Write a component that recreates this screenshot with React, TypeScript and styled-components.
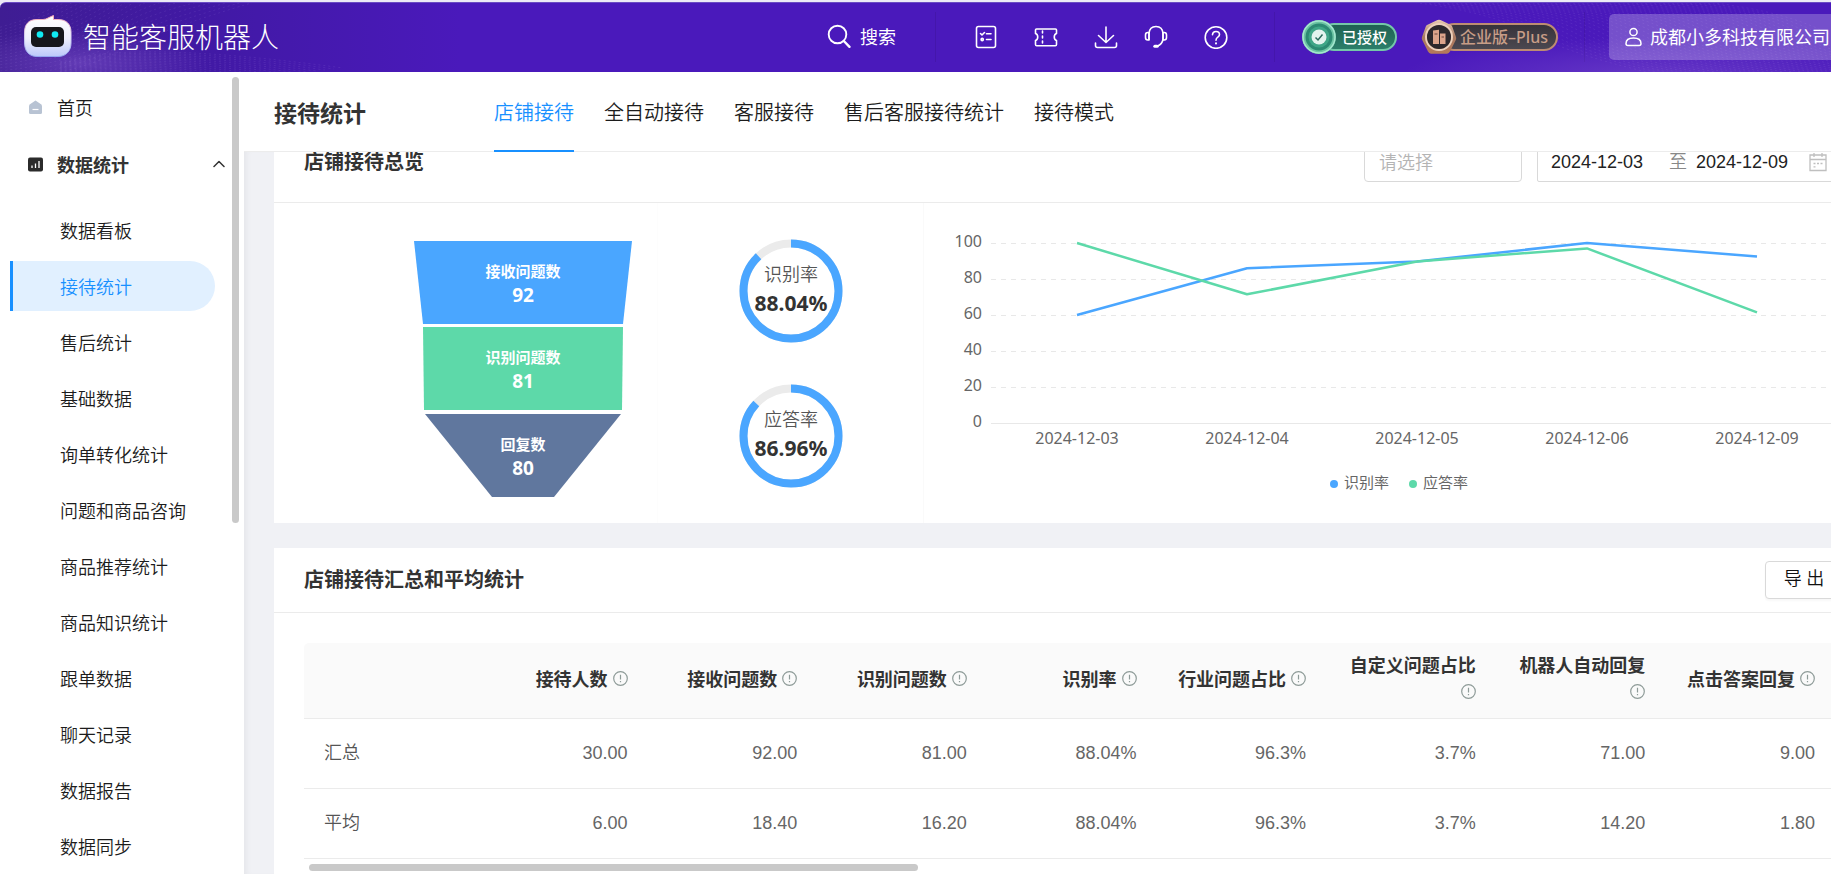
import React, { useLayoutEffect, useRef } from "react";
import styled, { createGlobalStyle } from "styled-components";

const cjk = `"Noto Sans", "Noto Sans CJK SC", sans-serif`;
const latin = `"Liberation Sans", "Noto Sans CJK SC", sans-serif`;

const GlobalStyle = createGlobalStyle`
  *, *::before, *::after { box-sizing: border-box; }
  body { margin: 0; font-family: ${cjk}; font-size: 18px; color: #333; background: #f0f1f5; }
  button, input, select { font: inherit; color: inherit; }
  h1, h2, ul, p { margin: 0; padding: 0; }
  ul { list-style: none; }
  a { color: inherit; text-decoration: none; }
`;

const Viewport = styled.div`
  height: 100vh;
  overflow-x: auto;
  overflow-y: hidden;
  scrollbar-width: none;
`;
const Shell = styled.div`
  display: flex;
  flex-direction: column;
  min-width: 1903px;
  height: 100%;
  padding-top: 2px;
  background: #eceaf6;
`;

/* ---------- top bar ---------- */
const TopBar = styled.header`
  position: relative;
  flex: none;
  display: flex;
  align-items: center;
  height: 70px;
  padding: 0 30px 2px 24px;
  overflow: hidden;
  border-top: 1px solid #6a4bc4;
  border-top-left-radius: 6px;
  background: linear-gradient(90deg, #3f1d93 0, #4119a4 200px, #4a19bb 460px, #4a19bb 100%);
  color: #fff;
`;
const Waves = styled.svg`
  position: absolute;
  inset: 0;
  width: 100%;
  height: 100%;
  pointer-events: none;
`;
const Brand = styled.a`
  position: relative;
  display: flex;
  align-items: center;
  gap: 11px;
  margin-right: auto;
`;
const BrandName = styled.span`
  font-size: 28px;
  font-weight: 300;
  line-height: 40px;
`;
const SearchButton = styled.button`
  position: relative;
  display: flex;
  align-items: center;
  gap: 8px;
  padding: 0 39px 0 0;
  border: 0;
  background: none;
  font-size: 18px;
  line-height: 24px;
`;
const Divider = styled.span`
  width: 1px;
  height: 50px;
  background: #4416ab;
`;
const Tools = styled.nav`
  position: relative;
  display: flex;
  gap: 36px;
  padding: 0 46px 0 38px;
`;
const ToolPair = styled.div`
  display: flex;
  gap: 26px;
`;
const ToolButton = styled.button`
  display: flex;
  width: 24px;
  height: 24px;
  padding: 0;
  border: 0;
  background: none;
`;
const Badges = styled.div`
  position: relative;
  display: flex;
  align-items: center;
  gap: 24px;
  padding: 0 26px;
`;
const Badge = styled.div`
  display: flex;
  align-items: center;
  svg { position: relative; flex: none; }
`;
const BadgeText = styled.span<{ $tone: "green" | "bronze" }>`
  margin-left: -17px;
  padding: 0 8px 0 ${(p) => (p.$tone === "green" ? 20 : 18)}px;
  border: 2px solid ${(p) => (p.$tone === "green" ? "#74c8a8" : "#bd8c72")};
  border-radius: 15px;
  background: ${(p) =>
    p.$tone === "green" ? "linear-gradient(#1f6152, #2c7f6a)" : "linear-gradient(#37333a, #4b4850)"};
  color: ${(p) => (p.$tone === "green" ? "#fff" : "#c79d87")};
  font-size: ${(p) => (p.$tone === "green" ? 15 : 16)}px;
  font-weight: 500;
  line-height: 24px;
  white-space: nowrap;
`;
const Account = styled.button`
  position: relative;
  display: flex;
  align-items: center;
  gap: 8px;
  width: 264px;
  height: 46px;
  margin-left: 24px;
  padding: 0 16px;
  border: 0;
  border-radius: 5px;
  background: rgba(255, 255, 255, 0.24);
  font-size: 18px;
  line-height: 24px;
  white-space: nowrap;
`;

/* ---------- frame ---------- */
const Body = styled.div`
  flex: 1;
  display: flex;
  min-height: 0;
  background: #f0f1f5;
`;
const Sidebar = styled.aside`
  position: relative;
  z-index: 2;
  flex: none;
  width: 244px;
  padding-top: 10px;
  overflow: hidden;
  background: #fff;
`;
const SideThumb = styled.span`
  position: absolute;
  top: 5px;
  right: 5px;
  width: 7px;
  height: 446px;
  border-radius: 4px;
  background: #c9c9c9;
`;
const SideTop = styled.a<{ $bold?: boolean }>`
  display: flex;
  align-items: center;
  height: 50px;
  margin-bottom: 7px;
  padding: 0 19px 0 28px;
  font-weight: ${(p) => (p.$bold ? 700 : 350)};
  color: ${(p) => (p.$bold ? "#333" : "#1c1c1c")};
  span { margin-left: 14px; }
  svg:last-child:not(:first-child) { margin-left: auto; }
`;
const SideLink = styled.a<{ $active?: boolean }>`
  display: flex;
  align-items: center;
  height: 50px;
  margin: 0 29px 6px 10px;
  padding-left: 47px;
  border-left: 3px solid ${(p) => (p.$active ? "#1890ff" : "transparent")};
  border-radius: 0 25px 25px 0;
  background: ${(p) => (p.$active ? "#e1f0ff" : "transparent")};
  color: ${(p) => (p.$active ? "#1890ff" : "#1c1c1c")};
  font-weight: 350;
`;
const SubMenu = styled.ul`
  padding-top: 9px;
`;
const Main = styled.main`
  flex: 1;
  display: flex;
  flex-direction: column;
  min-width: 0;
`;
const TitleBar = styled.div`
  flex: none;
  display: flex;
  align-items: stretch;
  height: 80px;
  padding-left: 30px;
  border-bottom: 1px solid #ececec;
  background: #fff;
`;
const PageTitle = styled.h1`
  width: 220px;
  font-size: 23px;
  line-height: 82px;
`;
const Tabs = styled.nav`
  display: flex;
  gap: 30px;
  margin-bottom: -1px;
`;
const Tab = styled.a<{ $active?: boolean }>`
  padding-top: 1px;
  border-bottom: 2px solid ${(p) => (p.$active ? "#1890ff" : "transparent")};
  color: ${(p) => (p.$active ? "#1890ff" : "#1c1c1c")};
  font-size: 20px;
  font-weight: 350;
  line-height: 80px;
`;
const Scroller = styled.div`
  flex: 1;
  min-height: 0;
  padding: 24px 30px;
  overflow-y: auto;
  scrollbar-width: none;
  box-shadow: inset 6px 0 6px -4px rgba(0, 0, 0, 0.05);
`;
const Card = styled.section`
  margin-bottom: 25px;
  background: #fff;
`;
const CardHead = styled.div<{ $tall?: boolean }>`
  display: flex;
  align-items: center;
  height: ${(p) => (p.$tall ? 81 : 65)}px;
  padding: 0 30px;
  border-bottom: 1px solid #ebebeb;
`;
const CardTitle = styled.h2`
  margin-right: auto;
  font-size: 20px;
  line-height: 20px;
`;
const ShopSelect = styled.select`
  width: 158px;
  height: 40px;
  margin-right: 15px;
  padding: 0 14px;
  appearance: none;
  border: 1px solid #d9d9d9;
  border-radius: 4px;
  background: #fff;
  color: #b4b4b4;
  font-weight: 350;
`;
const DateRange = styled.div`
  display: flex;
  align-items: center;
  width: 306px;
  height: 40px;
  padding: 0 13px;
  border: 1px solid #d9d9d9;
  border-radius: 2px;
  font-family: ${latin};
  color: #222;
`;
const DateInput = styled.input`
  width: 118px;
  padding: 0;
  border: 0;
  outline: 0;
  background: none;
  & + span + & { width: 113px; }
`;
const RangeWord = styled.span`
  margin-right: 9px;
  color: #888;
  font-weight: 350;
  line-height: 24px;
`;

/* ---------- overview ---------- */
const Overview = styled.div`
  display: flex;
  height: 320px;
`;
const FunnelPane = styled.div`
  flex: none;
  display: flex;
  justify-content: flex-end;
  width: 383px;
  padding: 38px 25px 0 0;
`;
const RingPane = styled.div`
  flex: none;
  display: flex;
  flex-direction: column;
  align-items: center;
  gap: 41px;
  width: 267px;
  padding-top: 36px;
  border-left: 1px solid #fdfdfd;
  border-right: 1px solid #fafafa;
`;
const ChartPane = styled.div`
  flex: 1;
  min-width: 0;
`;
const ChartSvg = styled.svg`
  display: block;
  width: 100%;
  height: 320px;
  font-family: ${cjk};
  fill: #666;
`;
const FunnelSvg = styled.svg`
  font-family: ${cjk};
  font-weight: 700;
  text-anchor: middle;
`;

/* ---------- table ---------- */
const TableWrap = styled.div`
  padding: 30px 38px 60px 30px;
`;
const Table = styled.table`
  width: 100%;
  table-layout: fixed;
  border-collapse: separate;
  border-spacing: 0;
  font-family: ${latin};
`;
const LabelCol = styled.col`
  width: 174px;
`;
const HeadCell = styled.th`
  height: 76px;
  padding: 10px 20px 11px;
  border-bottom: 1px solid #ebebeb;
  background: #fafafa;
  text-align: right;
  font-weight: 700;
  line-height: 27px;
  &:first-child { border-top-left-radius: 5px; }
  svg { margin-left: 5px; vertical-align: 0; }
`;
const Cell = styled.td`
  height: 70px;
  padding: 0 20px 2px;
  border-bottom: 1px solid #ebebeb;
  color: #666;
  text-align: right;
  line-height: 24px;
`;
const RowLabel = styled.th`
  padding: 0 20px 2px;
  border-bottom: 1px solid #ebebeb;
  color: #555;
  font-weight: 350;
  text-align: left;
  line-height: 24px;
`;
const TableThumb = styled.div`
  width: 609px;
  height: 7px;
  margin: 5px 0 0 5px;
  border-radius: 4px;
  background: #c9c9c9;
`;
const ExportButton = styled.button`
  width: 78px;
  height: 38px;
  padding: 0 0 4px;
  border: 1px solid #d9d9d9;
  border-radius: 4px;
  background: #fff;
  box-shadow: 0 2px 2px rgba(0, 0, 0, 0.03);
  font-weight: 350;
  line-height: 24px;
  color: #111;
`;

/* ---------- icons ---------- */
const line = {
  fill: "none",
  stroke: "currentColor",
  strokeWidth: 1.6,
  strokeLinecap: "round" as const,
  strokeLinejoin: "round" as const,
};

const Logo = () => (
  <svg width="48" height="44" viewBox="0 0 48 44" aria-hidden="true">
    <defs>
      <linearGradient id="shell" x1="0" y1="0" x2="0" y2="1">
        <stop offset="0" stopColor="#fff" />
        <stop offset="0.55" stopColor="#eeeffd" />
        <stop offset="1" stopColor="#bcc8fa" />
      </linearGradient>
      <linearGradient id="rim" x1="0" y1="0" x2="0" y2="1">
        <stop offset="0" stopColor="#f7a8b4" />
        <stop offset="0.5" stopColor="#d8d6f4" />
        <stop offset="1" stopColor="#93a6f0" />
      </linearGradient>
    </defs>
    <path
      d="M13 4.500H19C23 4.500 25 2 29.500 0.600V4.500H34C42 4.500 47 9 47 17V28C47 36 42 41.500 34 41.500H13C5 41.500 0.600 36 0.600 28V17C0.600 9 5 4.500 13 4.500Z"
      fill="url(#shell)"
      stroke="url(#rim)"
      strokeWidth="1"
    />
    <rect x="7" y="12" width="33" height="20" rx="5" fill="#17171c" />
    <circle cx="16" cy="19.500" r="3.300" fill="#10eaf2" />
    <circle cx="31" cy="19.500" r="3.300" fill="#10eaf2" />
  </svg>
);

const SearchIcon = () => (
  <svg width="25" height="25" viewBox="0 0 25 25" {...line} strokeWidth={1.9} aria-hidden="true">
    <circle cx="10.500" cy="10.500" r="8.800" />
    <path d="M16.800 17L22.500 22.800" strokeWidth="2.400" />
  </svg>
);
const ListIcon = () => (
  <svg width="24" height="24" viewBox="0 0 24 24" {...line}>
    <rect x="2.500" y="1.500" width="19" height="21" rx="2" />
    <path d="M6.500 8.500L8 10L10.500 7.500M12.500 8.800H17M12.500 14.500H17" />
    <circle cx="8.200" cy="14.500" r="1.100" />
  </svg>
);
const TicketIcon = () => (
  <svg width="24" height="24" viewBox="0 0 24 24" {...line}>
    <path d="M2.500 4H21.500Q22.500 4 22.500 5V8.500C19.500 9.500 19.500 14.500 22.500 15.500V19.500Q22.500 20.800 21.300 20.800H2.700Q1.500 20.800 1.500 19.500V15.500C4.500 14.500 4.500 9.500 1.500 8.500V5Q1.500 4 2.500 4Z" />
    <path d="M8.500 6V19.500" strokeDasharray="2 3" />
  </svg>
);
const DownloadIcon = () => (
  <svg width="24" height="24" viewBox="0 0 24 24" {...line}>
    <path d="M12 2V17M4.500 10.500L12 17.500L19.500 10.500M1.500 18V20.500Q1.500 22.500 3.500 22.500H20.500Q22.500 22.500 22.500 20.500V18" />
  </svg>
);
const HeadsetIcon = () => (
  <svg width="24" height="24" viewBox="0 0 24 24" {...line}>
    <path d="M5 14.500V8.500Q5.500 1.500 12 1.500Q18.500 1.500 19 8.500V14.500Q18 19.500 13.500 21" />
    <path d="M5 7.500H3.800Q1.500 7.500 1.500 10V12.500Q1.500 15 3.800 15H5ZM19 7.500H20.200Q22.500 7.500 22.500 10V12.500Q22.500 15 20.200 15H19Z" />
    <path d="M10.800 21.300H13.200" strokeWidth="3" />
  </svg>
);
const HelpIcon = () => (
  <svg width="24" height="24" viewBox="0 0 24 24" {...line}>
    <circle cx="12" cy="12.500" r="10.800" />
    <path d="M8.500 9.800Q8.700 6.500 12 6.500Q15.500 6.500 15.500 9.500Q15.500 11 13.800 12.200Q12 13.400 12 15.200" />
    <path d="M12 18.200V18.400" strokeWidth="2" />
  </svg>
);
const UserIcon = () => (
  <svg width="17" height="20" viewBox="0 0 17 20" {...line} strokeWidth={1.5} aria-hidden="true">
    <circle cx="8.500" cy="5" r="3.600" />
    <path d="M1 16.500Q1 11 8.500 11Q16 11 16 16.500Q16 18.500 14.200 18.500H2.800Q1 18.500 1 16.500Z" />
  </svg>
);
const VerifiedCoin = () => (
  <svg width="36" height="36" viewBox="0 0 36 36" aria-hidden="true">
    <circle cx="18" cy="18" r="17" fill="#6cc3a3" />
    <circle cx="18" cy="18" r="16" fill="none" stroke="#a5e6cf" strokeWidth="1.500" />
    <circle cx="18" cy="18" r="13.500" fill="#2c8a72" />
    <circle cx="18" cy="18" r="10.500" fill="#3fa587" />
    <circle cx="18" cy="18" r="7.500" fill="#e3f3ee" />
    <path d="M14.500 18.500L17 21L21.500 15.500" fill="none" stroke="#2a6a5c" strokeWidth="1.500" />
  </svg>
);
const PlusCoin = () => (
  <svg width="36" height="36" viewBox="0 0 36 36" aria-hidden="true">
    <defs>
      <linearGradient id="bronze" x1="0" y1="0" x2="0" y2="1">
        <stop offset="0" stopColor="#e9cbb4" />
        <stop offset="0.5" stopColor="#a87a62" />
        <stop offset="1" stopColor="#b5795a" />
      </linearGradient>
    </defs>
    <path d="M16.500 1Q18 0.300 19.500 1L30 6Q31 6.500 31.400 8L35 18Q35.500 19.500 34.800 21L29 32.500Q28 34.500 26 34.800H10Q8 34.500 7 32.500L1.200 21Q0.500 19.500 1 18L4.600 8Q5 6.500 6 6Z" fill="url(#bronze)" />
    <circle cx="18" cy="18" r="13" fill="none" stroke="#ecd0bb" strokeWidth="2" />
    <circle cx="18" cy="18" r="12" fill="#2d282c" />
    <path d="M12 11.500L18 10.800V25H12ZM19 14.500H24.500V25H19Z" fill="#dca48b" />
    <path d="M13.500 15H16.500M20.500 18H23" stroke="#6b453c" />
  </svg>
);
const HomeIcon = () => (
  <svg width="15" height="15" viewBox="0 0 15 15" aria-hidden="true">
    <path d="M7.500 0.500L13 4.200Q14 5 14 6.200V12.500Q14 14 12.500 14H2.500Q1 14 1 12.500V6.200Q1 5 2 4.200Z" fill="#b8c3d3" />
    <path d="M4.500 9.500H10.500" stroke="#fff" strokeWidth="1.200" />
  </svg>
);
const StatsIcon = () => (
  <svg width="15" height="15" viewBox="0 0 15 15" aria-hidden="true">
    <rect width="15" height="14" y="0.500" rx="2" fill="#2b2b2b" />
    <path d="M4 11V8.500M7.500 11V6.500M11 11V4" stroke="#fff" strokeWidth="1.300" />
  </svg>
);
const ChevronUp = () => (
  <svg width="12" height="8" viewBox="0 0 12 8" {...line} strokeWidth={1.5} aria-hidden="true">
    <path d="M1 6.500L6 1.500L11 6.500" />
  </svg>
);
const CalendarIcon = () => (
  <svg width="18" height="20" viewBox="0 0 18 20" fill="none" stroke="#bfbfbf" strokeWidth="1.300" aria-hidden="true">
    <path d="M1 3H17V18.500H1ZM1 7.500H17M5 1V5M13 1V5" />
    <path d="M4.500 11.500H6.500M8 11.500H10M11.500 11.500H13.500M4.500 14.800H6.500" />
  </svg>
);
const InfoIcon = () => (
  <svg width="15" height="15" viewBox="0 0 15 15" fill="none" stroke="#8e9b98" aria-hidden="true">
    <circle cx="7.500" cy="7.500" r="6.800" strokeWidth="1.200" />
    <path d="M7.500 3.800V8.600M7.500 10V11.200" strokeWidth="1.200" />
  </svg>
);

const HeaderWaves = () => (
  <Waves aria-hidden="true">
    <defs>
      <radialGradient id="glow">
        <stop offset="0" stopColor="#8a5fd6" stopOpacity="0.450" />
        <stop offset="1" stopColor="#8a5fd6" stopOpacity="0" />
      </radialGradient>
    </defs>
    <ellipse cx="80" cy="60" rx="130" ry="34" fill="url(#glow)" />
    <ellipse cx="1660" cy="74" rx="260" ry="40" fill="url(#glow)" />
    <g fill="none" stroke="#b79cf0" strokeDasharray="2 3" strokeOpacity="0.130">
      {Array.from({ length: 18 }, (_, i) => (
        <path key={i} d={`M-10 ${78 - i * 3}Q70 ${74 - i * 4} 120 ${48 - i * 5}T${300 - i * 6} -14`} />
      ))}
      {Array.from({ length: 18 }, (_, i) => (
        <path key={i} d={`M60 ${76 - i}Q130 ${70 - i * 2} ${190 + i * 9} ${82 - i}`} />
      ))}
      {Array.from({ length: 34 }, (_, i) => (
        <path key={i} d={`M${1380 + i * 9} -4Q${1480 + i * 9} 4 ${1530 + i * 9} 30T${1680 + i * 10} 76`} />
      ))}
    </g>
  </Waves>
);

/* ---------- data ---------- */
const sideLinks = [
  "数据看板", "接待统计", "售后统计", "基础数据", "询单转化统计", "问题和商品咨询",
  "商品推荐统计", "商品知识统计", "跟单数据", "聊天记录", "数据报告", "数据同步",
];
const tabs = ["店铺接待", "全自动接待", "客服接待", "售后客服接待统计", "接待模式"];
const columns = [
  "接待人数", "接收问题数", "识别问题数", "识别率", "行业问题占比", "自定义问题占比", "机器人自动回复", "点击答案回复",
];
const rows = [
  { label: "汇总", values: ["30.00", "92.00", "81.00", "88.04%", "96.3%", "3.7%", "71.00", "9.00"] },
  { label: "平均", values: ["6.00", "18.40", "16.20", "88.04%", "96.3%", "3.7%", "14.20", "1.80"] },
];
const funnel = [
  { label: "接收问题数", value: 92, color: "#4aa6ff", points: "0,0 218,0 209,83 9,83", y: 36 },
  { label: "识别问题数", value: 81, color: "#5dd9a9", points: "9,86 209,86 208,169 10,169", y: 122 },
  { label: "回复数", value: 80, color: "#60779e", points: "11,173 207,173 140,256 78,256", y: 209 },
];
const dates = ["2024-12-03", "2024-12-04", "2024-12-05", "2024-12-06", "2024-12-09"];
const series = [
  { name: "识别率", color: "#4aa6ff", values: [60, 86, 89.7, 100, 92.5] },
  { name: "应答率", color: "#5dd9a9", values: [100, 71.5, 89.7, 97, 61.5] },
];
const chartX = (i: number) => 153 + i * 170;
const chartY = (v: number) => 220 - v * 1.8;

const Ring = ({ label, value }: { label: string; value: number }) => (
  <svg width="104" height="104" viewBox="0 0 104 104" fontFamily={cjk} textAnchor="middle">
    <circle cx="52" cy="52" r="47.500" fill="none" stroke="#ebebeb" strokeWidth="8" />
    <circle
      cx="52"
      cy="52"
      r="47.500"
      fill="none"
      stroke="#4aa6ff"
      strokeWidth="8"
      pathLength="100"
      strokeDasharray={`${value} 100`}
      transform="rotate(-90 52 52)"
    />
    <text x="52" y="42" fontSize="18" fontWeight="350" fill="#555">{label}</text>
    <text x="52" y="72" fontSize="21" fontWeight="700" fill="#333">{value}%</text>
  </svg>
);

const Chart = () => (
  <ChartSvg viewBox="0 0 949 320" role="img" aria-label="识别率 应答率">
    {[0, 20, 40, 60, 80, 100].map((v) => (
      <g key={v}>
        <text x="58" y={chartY(v) + 4} fontSize="16" textAnchor="end">{v}</text>
        <path d={`M67 ${chartY(v) + 0.5}H918`} stroke="#e8e8e8" strokeDasharray={v ? "5 5" : undefined} />
      </g>
    ))}
    {dates.map((d, i) => (
      <text key={d} x={chartX(i)} y="241" fontSize="16" textAnchor="middle">{d}</text>
    ))}
    {series.map((s, i) => (
      <g key={s.name}>
        <polyline
          points={s.values.map((v, n) => `${chartX(n)},${chartY(v)}`).join(" ")}
          fill="none"
          stroke={s.color}
          strokeWidth="2.500"
          strokeLinejoin="round"
        />
        <circle cx={410 + i * 79} cy="281" r="4" fill={s.color} />
        <text x={420 + i * 79} y="285" fontSize="15">{s.name}</text>
      </g>
    ))}
  </ChartSvg>
);

export default function App() {
  const scroller = useRef<HTMLDivElement>(null);
  useLayoutEffect(() => {
    if (scroller.current) scroller.current.scrollTop = 54;
  }, []);

  return (
    <>
      <GlobalStyle />
      <Viewport>
        <Shell>
          <TopBar>
            <HeaderWaves />
            <Brand href="#">
              <Logo />
              <BrandName>智能客服机器人</BrandName>
            </Brand>
            <SearchButton><SearchIcon />搜索</SearchButton>
            <Divider />
            <Tools>
              <ToolButton aria-label="任务"><ListIcon /></ToolButton>
              <ToolButton aria-label="卡券"><TicketIcon /></ToolButton>
              <ToolPair>
                <ToolButton aria-label="下载"><DownloadIcon /></ToolButton>
                <ToolButton aria-label="客服"><HeadsetIcon /></ToolButton>
              </ToolPair>
              <ToolButton aria-label="帮助"><HelpIcon /></ToolButton>
            </Tools>
            <Divider />
            <Badges>
              <Badge><VerifiedCoin /><BadgeText $tone="green">已授权</BadgeText></Badge>
              <Badge><PlusCoin /><BadgeText $tone="bronze">企业版–Plus</BadgeText></Badge>
            </Badges>
            <Divider />
            <Account><UserIcon />成都小多科技有限公司</Account>
          </TopBar>
          <Body>
            <Sidebar>
              <SideTop href="#"><HomeIcon /><span>首页</span></SideTop>
              <SideTop href="#" $bold><StatsIcon /><span>数据统计</span><ChevronUp /></SideTop>
              <SubMenu>
                {sideLinks.map((s) => (
                  <li key={s}><SideLink href="#" $active={s === "接待统计"}>{s}</SideLink></li>
                ))}
              </SubMenu>
              <SideThumb />
            </Sidebar>
            <Main>
              <TitleBar>
                <PageTitle>接待统计</PageTitle>
                <Tabs>
                  {tabs.map((t, i) => <Tab key={t} href="#" $active={i === 0}>{t}</Tab>)}
                </Tabs>
              </TitleBar>
              <Scroller ref={scroller}>
                <Card>
                  <CardHead $tall>
                    <CardTitle>店铺接待总览</CardTitle>
                    <ShopSelect aria-label="店铺"><option>请选择</option></ShopSelect>
                    <DateRange>
                      <DateInput aria-label="开始日期" defaultValue="2024-12-03" />
                      <RangeWord>至</RangeWord>
                      <DateInput aria-label="结束日期" defaultValue="2024-12-09" />
                      <CalendarIcon />
                    </DateRange>
                  </CardHead>
                  <Overview>
                    <FunnelPane>
                      <FunnelSvg width="218" height="257" viewBox="0 0 218 257">
                        {funnel.map((f) => (
                          <g key={f.label}>
                            <polygon points={f.points} fill={f.color} />
                            <text x="109" y={f.y} fontSize="15" fill="#fff">{f.label}</text>
                            <text x="109" y={f.y + 25} fontSize="19" fill="#fff">{f.value}</text>
                          </g>
                        ))}
                      </FunnelSvg>
                    </FunnelPane>
                    <RingPane>
                      <Ring label="识别率" value={88.04} />
                      <Ring label="应答率" value={86.96} />
                    </RingPane>
                    <ChartPane><Chart /></ChartPane>
                  </Overview>
                </Card>
                <Card>
                  <CardHead>
                    <CardTitle>店铺接待汇总和平均统计</CardTitle>
                    <ExportButton>导 出</ExportButton>
                  </CardHead>
                  <TableWrap>
                    <Table>
                      <colgroup>
                        <LabelCol />
                        {columns.map((c) => <col key={c} />)}
                      </colgroup>
                      <thead>
                        <tr>
                          <HeadCell />
                          {columns.map((c) => <HeadCell key={c} scope="col">{c}<InfoIcon /></HeadCell>)}
                        </tr>
                      </thead>
                      <tbody>
                        {rows.map((r) => (
                          <tr key={r.label}>
                            <RowLabel scope="row">{r.label}</RowLabel>
                            {r.values.map((v, i) => <Cell key={i}>{v}</Cell>)}
                          </tr>
                        ))}
                      </tbody>
                    </Table>
                    <TableThumb />
                  </TableWrap>
                </Card>
              </Scroller>
            </Main>
          </Body>
        </Shell>
      </Viewport>
    </>
  );
}
